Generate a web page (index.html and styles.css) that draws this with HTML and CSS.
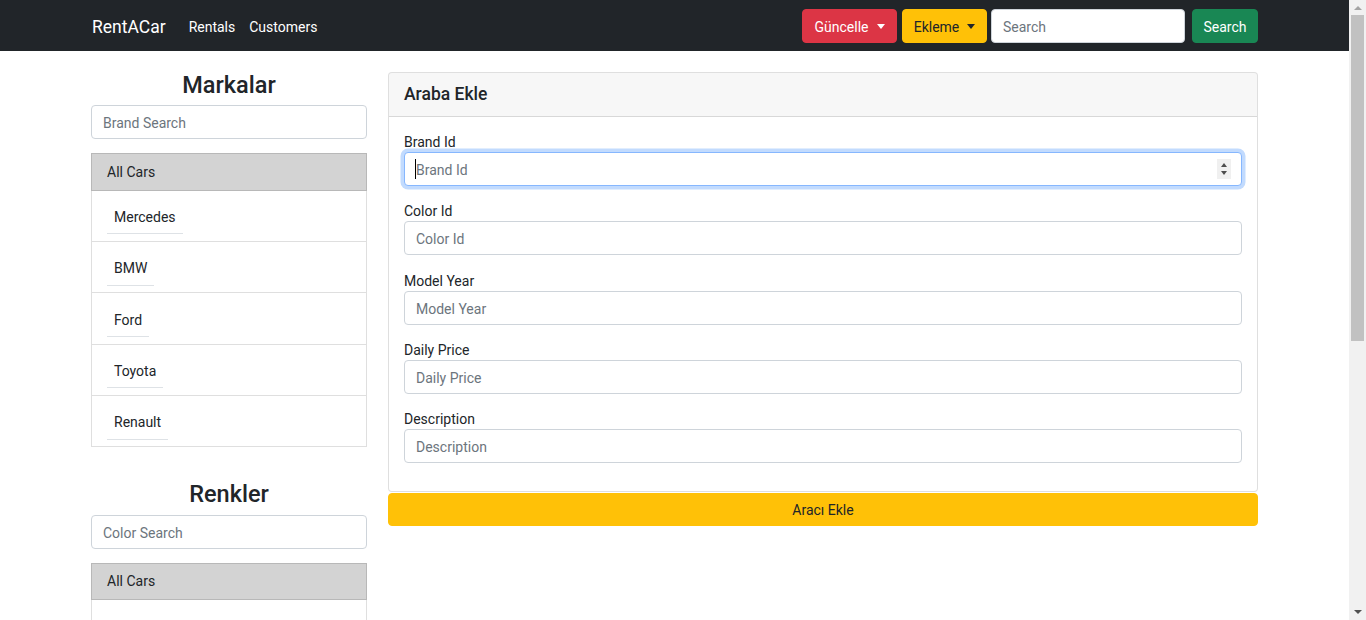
FILE: index.html
```html
<!DOCTYPE html>
<html lang="tr">
<head>
<meta charset="utf-8">
<title>RentACar</title>
<link rel="stylesheet" href="styles.css">
</head>
<body>
<nav class="navbar">
  <div class="nav-inner">
    <a class="brand" href="#">RentACar</a>
    <ul class="nav-links">
      <li><a href="#">Rentals</a></li>
      <li><a href="#">Customers</a></li>
    </ul>
    <form class="nav-form">
      <button type="button" class="btn btn-danger dropdown-toggle btn-guncelle">Güncelle</button>
      <button type="button" class="btn btn-warning dropdown-toggle btn-ekleme">Ekleme</button>
      <input class="nav-search" type="search" placeholder="Search">
      <button type="button" class="btn btn-success btn-search">Search</button>
    </form>
  </div>
</nav>

<main class="page">
  <aside class="sidebar">
    <section class="filter">
      <h3 class="filter-title">Markalar</h3>
      <input class="form-control" type="text" placeholder="Brand Search">
      <ul class="list">
        <li class="list-item active">All Cars</li>
        <li class="list-item"><span class="list-link">Mercedes</span></li>
        <li class="list-item"><span class="list-link">BMW</span></li>
        <li class="list-item"><span class="list-link">Ford</span></li>
        <li class="list-item"><span class="list-link">Toyota</span></li>
        <li class="list-item"><span class="list-link">Renault</span></li>
      </ul>
    </section>
    <section class="filter">
      <h3 class="filter-title">Renkler</h3>
      <input class="form-control" type="text" placeholder="Color Search">
      <ul class="list">
        <li class="list-item active">All Cars</li>
        <li class="list-item"><span class="list-link">Beyaz</span></li>
        <li class="list-item"><span class="list-link">Siyah</span></li>
        <li class="list-item"><span class="list-link">Kırmızı</span></li>
        <li class="list-item"><span class="list-link">Mavi</span></li>
        <li class="list-item"><span class="list-link">Gri</span></li>
        <li class="list-item"><span class="list-link">Yeşil</span></li>
        <li class="list-item"><span class="list-link">Lacivert</span></li>
        <li class="list-item"><span class="list-link">Sarı</span></li>
        <li class="list-item"><span class="list-link">Turuncu</span></li>
      </ul>
    </section>
  </aside>

  <section class="car-form">
    <div class="card">
      <div class="card-header"><h5 class="card-title">Araba Ekle</h5></div>
      <div class="card-body">
        <div class="field">
          <label class="field-label" for="brandId">Brand Id</label>
          <div class="input-wrap">
            <input id="brandId" class="form-control is-focused" type="number" placeholder="Brand Id">
            <span class="fake-caret"></span>
            <span class="spinner"><i class="spin-up"></i><i class="spin-down"></i></span>
          </div>
        </div>
        <div class="field">
          <label class="field-label" for="colorId">Color Id</label>
          <input id="colorId" class="form-control" type="number" placeholder="Color Id">
        </div>
        <div class="field">
          <label class="field-label" for="modelYear">Model Year</label>
          <input id="modelYear" class="form-control" type="number" placeholder="Model Year">
        </div>
        <div class="field">
          <label class="field-label" for="dailyPrice">Daily Price</label>
          <input id="dailyPrice" class="form-control" type="number" placeholder="Daily Price">
        </div>
        <div class="field">
          <label class="field-label" for="description">Description</label>
          <input id="description" class="form-control" type="text" placeholder="Description">
        </div>
      </div>
    </div>
    <button type="button" class="btn btn-warning btn-block">Aracı Ekle</button>
  </section>
</main>

<div class="scrollbar" aria-hidden="true">
  <span class="sb-arrow sb-up"></span>
  <span class="sb-thumb"></span>
  <span class="sb-arrow sb-down"></span>
</div>
</body>
</html>
```

FILE: styles.css
```css
*, *::before, *::after { box-sizing: border-box; }

html { font-size: 14px; }

body {
  margin: 0 17px 0 0;
  font-family: Roboto, "Segoe UI", "Open Sans", sans-serif;
  font-size: 14px;
  line-height: 1.5;
  color: #212529;
  background: #fff;
}

/* navbar */
.navbar {
  background: #212529;
  padding: 9px 0 8px;
}
.nav-inner {
  width: 1167px;
  margin: 0 auto;
  height: 34px;
  display: flex;
  align-items: center;
}
.brand {
  font-size: 17.5px;
  color: #fff;
  text-decoration: none;
  margin-right: 16px;
  padding: 2px 0 0 1px;
}
.nav-links {
  list-style: none;
  margin: 0;
  padding: 0;
  display: flex;
}
.nav-links a {
  display: block;
  padding: 2px 7px 0;
  color: #fff;
  text-decoration: none;
}
.nav-form {
  margin: 0 0 0 auto;
  display: flex;
  align-items: center;
}
.nav-search {
  width: 194px;
  height: 34px;
  padding: 2px 11px 0;
  border: 1px solid #ced4da;
  border-radius: 4px;
  font: inherit;
  color: #495057;
  background: #fff;
  margin-right: 7px;
  outline: none;
}
.nav-search::placeholder,
.form-control::placeholder { color: #6c757d; opacity: 1; }

/* buttons */
.btn {
  display: inline-flex;
  align-items: center;
  justify-content: center;
  height: 34px;
  padding: 2px 12px 0;
  border: 1px solid transparent;
  border-radius: 4px;
  font: inherit;
  line-height: 1.5;
  cursor: pointer;
}
.btn-danger { background: #dc3545; border-color: #dc3545; color: #fff; }
.btn-warning { background: #ffc107; border-color: #ffc107; color: #212529; }
.btn-success { background: #198754; border-color: #198754; color: #fff; }
.btn-guncelle { width: 95px; margin-right: 5px; }
.btn-ekleme { width: 85px; margin-right: 4px; }
.btn-search { width: 66px; }
.dropdown-toggle::after {
  content: "";
  display: inline-block;
  margin: -2px 0 0 8px;
  border-top: 5px solid currentColor;
  border-left: 4.5px solid transparent;
  border-right: 4.5px solid transparent;
}

/* page layout */
.page {
  width: 1167px;
  margin: 21px auto 0;
  padding-bottom: 50px;
  display: flex;
  align-items: flex-start;
  gap: 21px;
}
.sidebar { width: 276px; flex: none; }
.car-form { flex: 1; }

.filter + .filter { margin-top: 34px; }
.filter-title {
  margin: -1px 0 6px;
  font-size: 23.5px;
  font-weight: 500;
  line-height: 1.2;
  text-align: center;
}

.form-control {
  display: block;
  width: 100%;
  height: 34px;
  padding: 2px 11px 0;
  border: 1px solid #ced4da;
  border-radius: 4px;
  font: inherit;
  color: #495057;
  background: #fff;
  outline: none;
}
.form-control[type=number] { -moz-appearance: textfield; }
.form-control::-webkit-inner-spin-button,
.form-control::-webkit-outer-spin-button { -webkit-appearance: none; margin: 0; }

.list {
  list-style: none;
  margin: 14px 0 0;
  padding: 0;
}
.list-item {
  border: 1px solid rgba(0, 0, 0, .125);
  padding: 7.7px 15px 6.7px;
}
.list-item + .list-item { border-top: 0; }
.list-item.active { background: #d3d3d3; }
.list-link {
  display: inline-block;
  padding: 8.5px 7px 5.5px;
  border-bottom: 1px solid #dee2e6;
  color: #212529;
}

/* card */
.card {
  border: 1px solid rgba(0, 0, 0, .125);
  border-radius: 4px;
  background: #fff;
}
.card-header {
  background: rgba(0, 0, 0, .03);
  border-bottom: 1px solid rgba(0, 0, 0, .125);
  border-radius: 3px 3px 0 0;
  padding: 11px 15px;
}
.card-title {
  margin: 0;
  font-size: 17.5px;
  font-weight: 500;
  line-height: 1.2;
}
.card-body { padding: 14px 15px; }
.field { margin-bottom: 14.25px; }
.field-label { display: block; padding-top: 1px; margin-bottom: -1px; }

.input-wrap { position: relative; }
.form-control.is-focused {
  border-color: #86b7fe;
  box-shadow: 0 0 0 3.5px rgba(13, 110, 253, .25);
  caret-color: transparent;
}
.fake-caret {
  position: absolute;
  left: 11px;
  top: 7px;
  width: 1px;
  height: 20px;
  background: #000;
}
.spinner {
  position: absolute;
  right: 11px;
  top: 7px;
  width: 14px;
  height: 20px;
  background: #f0f0f0;
}
.spinner i {
  position: absolute;
  left: 3.5px;
  width: 0;
  height: 0;
  border-left: 3.5px solid transparent;
  border-right: 3.5px solid transparent;
}
.spin-up { top: 4px; border-bottom: 4px solid #4d4d4d; }
.spin-down { bottom: 4px; border-top: 4px solid #4d4d4d; }

.btn-block {
  display: flex;
  width: 100%;
  height: 33px;
  margin-top: 1px;
}

/* classic window scrollbar (the page is taller than the window) */
.scrollbar {
  position: fixed;
  top: 0;
  right: 0;
  width: 17px;
  height: 100vh;
  background: #f1f1f1;
  display: flex;
  flex-direction: column;
  align-items: center;
}
.sb-arrow {
  flex: none;
  height: 17px;
  width: 17px;
  position: relative;
}
.sb-arrow::before {
  content: "";
  position: absolute;
  left: 4.5px;
  border-left: 4px solid transparent;
  border-right: 4px solid transparent;
}
.sb-up::before { top: 6px; border-bottom: 4px solid #a3a3a3; }
.sb-down { margin-top: auto; }
.sb-down::before { top: 7px; border-top: 4px solid #505050; }
.sb-thumb {
  flex: none;
  width: 13px;
  height: 326px;
  margin-top: -2px;
  background: #c1c1c1;
}
```
